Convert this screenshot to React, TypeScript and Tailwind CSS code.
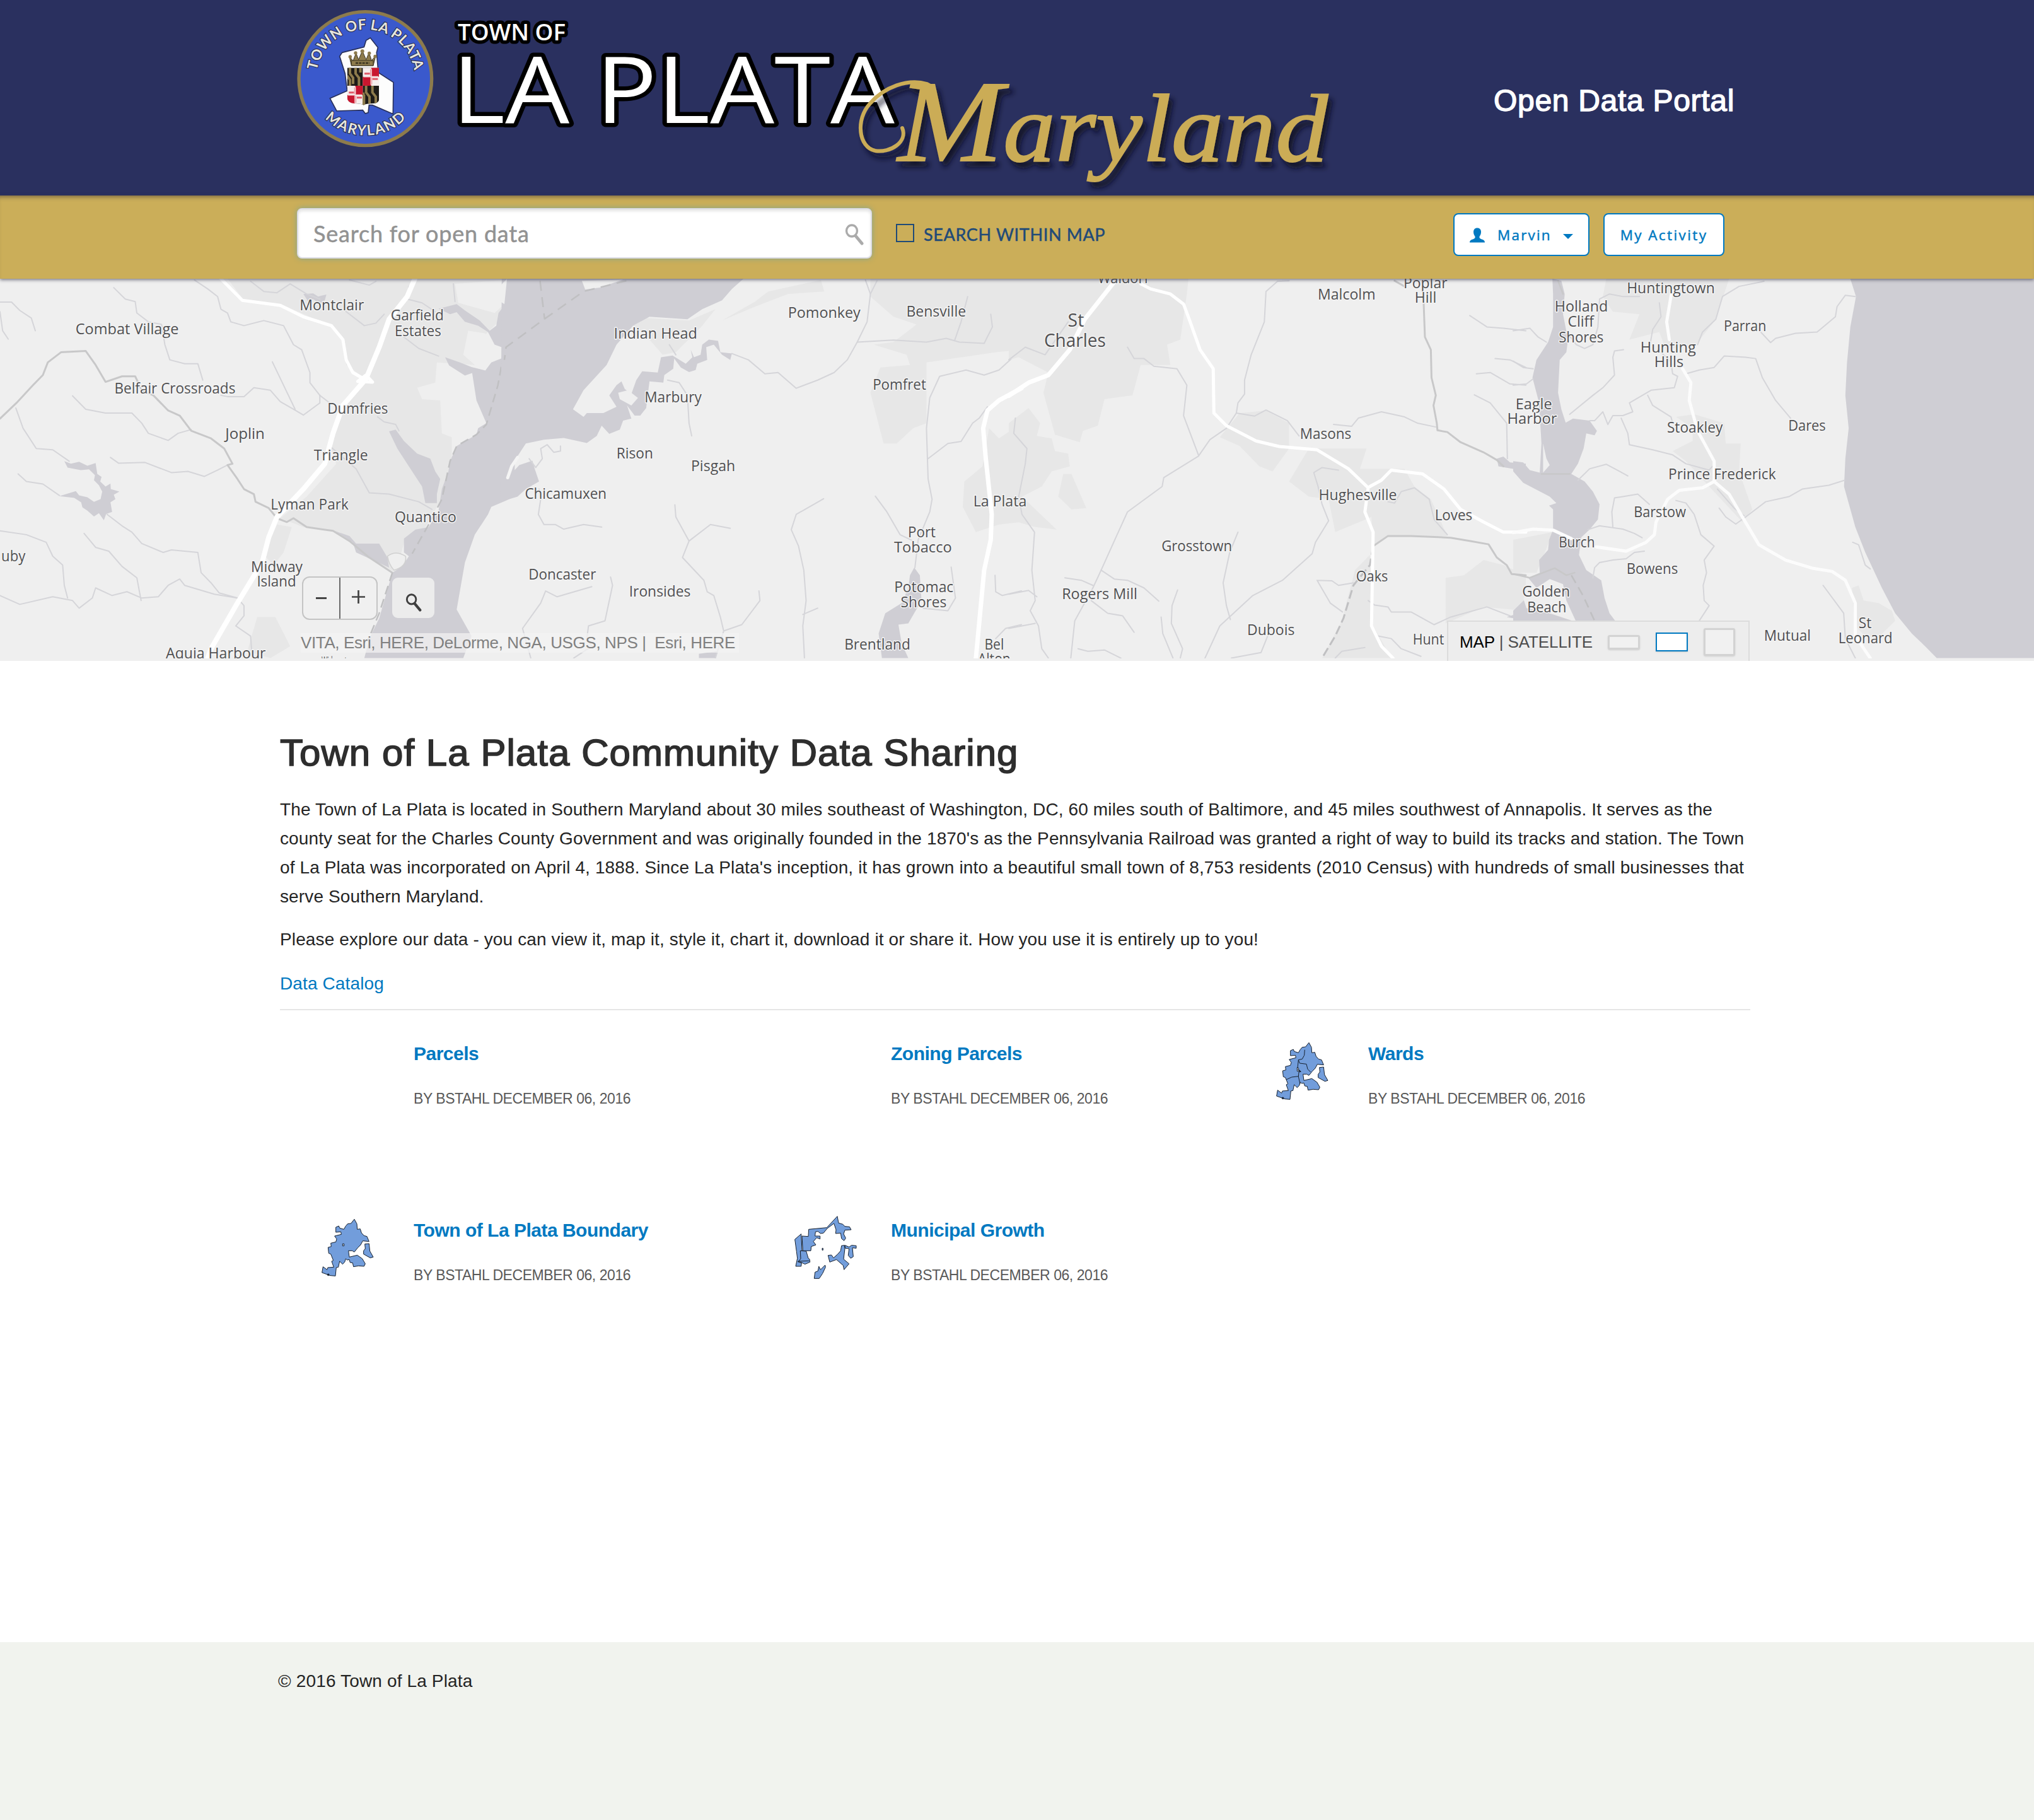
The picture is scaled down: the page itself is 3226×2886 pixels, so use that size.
import React from "react";

type Label = [string, number, number, number, number?];

const SHEET_Y = 0.4018;

/* Place names per map sheet: text, left, right, baseline, font size */
const labelsA: Label[] = [
  ["Combat Village", 229, 542, 248], ["Montclair", 909, 1104, 153], ["Garfield", 1185, 1346, 193], ["Estates", 1197, 1338, 254],
  ["Belfair Crossroads", 347, 714, 482], ["Dumfries", 993, 1177, 562], ["Joplin", 683, 803, 661], ["Triangle", 952, 1116, 746],
  ["Lyman Park", 821, 1057, 940], ["Quantico", 1197, 1384, 990], ["Midway", 761, 918, 1185], ["Island", 779, 898, 1244],
  ["uby", 4, 77, 1144], ["Aquia Harbour", 503, 806, 1528], ["Widewater", 975, 1070, 1562],
];
const labelsB: Label[] = [
  ["Indian Head", 332, 585, 264], ["Pomonkey", 860, 1080, 184], ["Bensville", 1219, 1400, 179], ["Pomfret", 1117, 1279, 467],
  ["Marbury", 425, 598, 517], ["Rison", 340, 451, 737], ["Pisgah", 566, 700, 787], ["Chicamuxen", 62, 310, 896],
  ["La Plata", 1422, 1584, 926], ["Port", 1224, 1308, 1049], ["Tobacco", 1182, 1357, 1109], ["Potomac", 1182, 1362, 1265],
  ["Shores", 1202, 1341, 1325], ["Doncaster", 73, 278, 1215], ["Ironsides", 378, 565, 1284], ["Brentland", 1031, 1231, 1493],
  ["Bel", 1456, 1515, 1493], ["Alton", 1436, 1535, 1550],
];
const labelsC: Label[] = [
  ["Waldorf", 270, 424, 46], ["St", 179, 228, 218, 30], ["Charles", 107, 294, 298, 30], ["Malcolm", 937, 1112, 111], ["Poplar", 1197, 1330, 66],
  ["Hill", 1231, 1297, 124], ["Masons", 883, 1039, 661], ["Hughesville", 940, 1177, 902], ["Loves", 1292, 1406, 981],
  ["Grosstown", 463, 677, 1105], ["Oaks", 1053, 1150, 1224], ["Rogers Mill", 161, 390, 1294], ["Dubois", 723, 867, 1434],
  ["Hunt", 1225, 1320, 1473],
];
const labelsD: Label[] = [
  ["Huntingtown", 342, 607, 85], ["Holland", 125, 285, 158], ["Cliff", 164, 243, 219], ["Shores", 137, 272, 279], ["Parran", 634, 762, 235],
  ["Hunting", 383, 550, 319], ["Hills", 425, 513, 377], ["Eagle", 7, 117, 543], ["Harbor", -18, 132, 601], ["Stoakley", 463, 631, 637],
  ["Dares", 828, 941, 628], ["Prince Frederick", 467, 791, 821], ["Barstow", 363, 520, 970], ["Burch", 137, 246, 1090],
  ["Bowens", 341, 496, 1194], ["Golden", 27, 171, 1284], ["Beach", 42, 160, 1344], ["St", 1040, 1079, 1408], ["Leonard", 979, 1142, 1468],
  ["Mutual", 755, 896, 1458],
];

function Labels({ items, ox, sx }: { items: Label[]; ox: number; sx: number }) {
  return (
    <g fill="#505052" stroke="#f4f4f4" strokeWidth={3} strokeLinejoin="round" className="[paint-order:stroke] [font-family:'Open_Sans','Noto_Sans',sans-serif]">
      {items.map(([t, x1, x2, y, size]) => (
        <text key={t + x1} x={ox + x1 * sx} y={430.5 + y * SHEET_Y} fontSize={size ?? 23.5} textLength={(x2 - x1) * sx} lengthAdjust="spacingAndGlyphs">
          {t}
        </text>
      ))}
    </g>
  );
}

const W = "#cfced4";
const U = "#e7e7e7";
const LAND = "#efefef";

function Lines({ d, c, w, dash }: { d: string[]; c: string; w: number; dash?: string }) {
  return (
    <g fill="none" stroke={c} strokeWidth={w} strokeLinejoin="round" strokeLinecap={dash ? "butt" : "round"} strokeDasharray={dash}>
      {d.map((p) => (
        <path key={p} d={p} vectorEffect="non-scaling-stroke" />
      ))}
    </g>
  );
}

const STREAM = "#d5d5d9";
const COUNTY = "#c8c8c9";

function MapCanvas() {
  return (
    <svg viewBox="0 442 3226 606" className="absolute inset-0 h-full w-full" aria-label="Map">
      <rect x="0" y="442" width="3226" height="606" fill={LAND} />
      <g transform="translate(0 430) scale(0.52296 0.4018)">
        <path fill={U} d="M690 30L1538 30L1535 170L1480 240L1405 330L1440 370L1325 360L1320 440L1265 460L1280 505L1335 510L1340 640L1370 655L1370 780L1330 920L1290 1010L1230 1050L1200 1190L1130 1140L1030 1030L920 1010L850 975L930 890L1020 760L1000 690L1040 530L1115 430L1050 370L1040 260L1000 215L860 135L740 115Z" />
        <path fill={LAND} d="M1420 235L1470 245L1530 305L1470 390L1405 330ZM1380 50L1535 35L1530 130L1500 165L1390 125Z" />
        <path fill={U} d="M780 1365L835 1365L880 1480L820 1527L750 1500ZM840 1000L885 1010L860 1110L830 1160L800 1120Z" />
        <path fill={W} d="M1535 30L1535 125L1512 165L1505 215L1485 235L1455 195L1410 155L1385 130L1330 148L1365 170L1385 162L1410 200L1450 215L1480 240L1500 290L1532 305L1520 345L1490 360L1472 392L1430 378L1395 360L1350 340L1362 372L1410 412L1432 402L1445 510L1475 600L1450 620L1445 645L1385 690L1365 750L1360 790L1340 860L1330 945L1300 1010L1260 1020L1225 1055L1225 1110L1240 1125L1220 1165L1190 1190L1170 1280L1150 1370L1120 1450L1105 1527L1405 1527L1430 1440L1385 1335L1410 1150L1440 1040L1480 960L1490 930L1535 905L1560 890L1568 30Z" />
        <path fill={W} d="M1180 632L1200 625L1225 670L1265 720L1305 740L1320 790L1335 820L1325 880L1325 915L1290 915L1280 850L1240 770L1205 700ZM1015 1025L1060 1045L1080 1075L1150 1075L1175 1130L1180 1170L1130 1140L1080 1110L1070 1070Z" />
        <path fill={W} d="M195 750L215 760L240 752L265 768L290 757L295 800L308 812L304 830L320 850L335 838L336 860L362 870L345 882L350 900L335 912L340 950L322 958L315 983L300 955L285 968L265 945L250 932L246 912L225 895L180 888L230 868L240 885L265 892L285 910L305 900L310 870L300 845L285 825L288 805L270 782L245 785L205 775ZM920 90L950 88L965 100L990 92L985 115L970 130L950 110L935 120Z" />
        <path fill={LAND} d="M1175 1125Q1200 1100 1230 1125Q1235 1165 1195 1180Q1180 1160 1175 1125Z" stroke="#d0d0d0" strokeWidth="3" />
        <Lines c={STREAM} w={2} d={[
          "M345 65L380 110L410 120L415 165L450 200L490 210L500 290L515 350L560 365L600 365L615 430",
          "M0 122L35 122L60 155L95 185L107 235M0 160L8 235L25 268",
          "M590 35L630 70L660 100L670 150L690 165L700 200L740 215L800 195L860 215L890 290L915 310L940 400L940 440L970 490L970 520L920 568L890 545L850 515L820 470L770 460L740 495L690 495L670 490",
          "M826 358L860 450L895 545M970 490L1000 520",
          "M760 40L800 80L840 85L880 50L930 90L970 110M1040 150L1105 215L1140 205L1165 170M1240 60L1235 110L1280 125L1320 160M1060 35L1120 55L1140 40M1375 50L1380 120M1225 260L1270 305L1330 335",
          "M220 492L260 545L320 560L400 560L430 600L450 640L510 668L540 640L580 625",
          "M48 540L70 620L110 700L160 705L210 750",
          "M335 735L360 758L440 755L520 795L570 790L620 810L660 785L690 765",
          "M55 800L80 830L130 840L180 885M325 960L370 1005L400 1030L430 1075L495 1110L520 1100L600 1110L610 1190L640 1230L665 1270L720 1290L740 1320L740 1360L715 1400L760 1440L765 1527",
          "M0 1025L80 1040L140 1070L160 1125L190 1160L195 1240L205 1290M0 1280L60 1315L160 1285L220 1300L240 1330L280 1290L290 1250L340 1280L385 1265L430 1290L480 1285L510 1240L545 1215L560 1240L650 1275L720 1290",
          "M255 1035L290 1090L330 1105L370 1165L415 1210L428 1300",
          "M1145 575L1165 595L1200 605L1210 630M1000 690L1080 780L1120 875L1180 880L1270 910L1310 940",
        ]} />
        <Lines c={COUNTY} w={3} d={[
          "M0 582L50 520L100 450L130 410L145 360L185 320L260 315L290 370L320 437L370 415L410 415L430 470L465 490L510 550L545 570L580 630L640 660L680 700L705 760L690 765L720 820L740 860L770 880L775 910L815 935L840 975L870 990L890 975L930 1010L1010 1025L1060 1065L1120 1130L1190 1190",
        ]} />
        <Lines c="#c0c0c2" w={2.5} dash="14 8" d={["M1555 285L1530 310L1510 450L1475 605L1445 645L1385 690L1365 750L1340 900L1300 1000L1250 1115M1190 1190L1150 1350L1115 1460"]} />
        <Lines c="#ffffff" w={8} d={["M1258 30L1235 100L1180 190L1150 300L1110 425L1040 530L1010 640L985 760L920 860L840 970L815 1050L795 1150L720 1310L640 1490L630 1527"]} />
        <Lines c="#ffffff" w={5} d={["M670 30L735 115L850 135L920 180L1005 215L1040 270L1050 350L1070 400L1110 430M1085 435L1130 438L1110 410Z"]} />
      </g>
      <g transform="translate(800 430) scale(0.52296 0.4018)">
        <path fill={U} d="M1110 30L1568 30L1568 310L1490 320L1280 360L1280 600L1240 620L1190 680L1150 680L1110 480L1140 380L1230 370L1220 330L1120 290L1180 280L1250 210L1180 180L1110 100ZM390 215L430 185L560 195L640 150L600 215L520 320L480 330L440 270ZM800 80L960 35L970 80L860 90L760 140L660 195L760 120ZM1470 620L1500 660L1568 600L1568 990L1500 1000L1430 1030L1390 930L1395 830L1450 770Z" />
        <path fill={W} d="M-8 30L725 30L690 70L660 115L600 150L555 190L440 180L390 215L340 290L310 370L240 470L208 545L240 575L250 560L300 560L340 535L318 490L340 450L355 435L365 465L385 485L400 430L418 395L465 400L475 340L510 333L550 365L570 340L565 310L575 340L595 330L600 290L620 270L648 275L655 320L690 325L685 350L660 330L635 290L612 300L615 350L585 365L580 390L560 398L535 380L515 345L512 385L485 410L482 440L440 435L430 540L412 570L395 570L372 530L385 582L360 590L350 625L318 642L295 610L280 650L250 678L180 658L120 665L65 680L40 730L10 815L45 765L85 748L92 780L105 830L65 860L40 890L0 905L-12 910Z" />
        <path fill={LAND} d="M235 38L360 33L290 65L245 72ZM-14 60L8 30L0 130L-12 120Z" />
        <path fill={LAND} d="M345 480L375 470L405 500L385 530L350 505Z" />
        <path fill={W} d="M1243 1170L1260 1200L1265 1300L1225 1390L1195 1395L1205 1470L1225 1527L1145 1527L1135 1430L1155 1350L1205 1310L1225 1250L1230 1200ZM590 1510L645 1500L640 1527L590 1527Z" />
        <Lines c={STREAM} w={2} d={[
          "M1095 35L1110 90L1100 200L1070 280L1040 350L1000 400L950 430L885 462L830 400L790 405L740 350L690 325",
          "M1130 38L1110 90M1070 280L1180 272L1280 280L1340 265L1380 280L1455 285L1480 220L1475 170M1405 100L1385 200L1365 275",
          "M1568 310L1500 390L1455 410L1400 390L1320 415L1290 500L1280 620L1285 820L1297 900L1290 950L1255 1060L1245 1170",
          "M1285 740L1345 680L1385 672L1420 600L1440 580L1465 535",
          "M495 430L530 440L555 490L560 600L568 650M500 290L520 330",
          "M75 740L95 775L115 740L110 700L130 685L150 715L170 710L170 690",
          "M105 860L110 900L103 960L120 1000L155 1000L180 1018L240 1000L295 1010",
          "M517 922L520 970L560 1065L540 1130L605 1220L615 1265L635 1280L655 1365L665 1420L640 1527M560 1065L625 1000L685 1015M665 1420L720 1395L775 1300L772 1262",
          "M968 898L885 960L870 1020L892 1085L908 1180L915 1300L905 1400L910 1527M905 1355L950 1330",
          "M1125 888L1160 950L1200 1040L1240 1065M1355 1168L1368 1290L1345 1340L1270 1330",
          "M265 1245L160 1285L125 1262L110 1310L55 1410L80 1527M322 1207L328 1240L305 1380L255 1400L250 1450L265 1480L210 1527",
          "M1488 1200L1490 1265L1510 1280L1568 1262M1568 1395L1520 1410L1490 1450M1550 580L1540 610L1568 650M1568 830L1555 880",
        ]} />
        <Lines c="#c0c0c2" w={2.5} dash="16 10" d={["M370 38L240 80L120 190L5 300L0 350M108 38L122 190"]} />
        <Lines c="#ffffff" w={7} d={["M1568 462L1500 510L1465 550L1452 620L1460 740L1478 960L1475 1060L1455 1180L1430 1527"]} />
        <Lines c="#f4f4f4" w={5} d={["M10 815L22 770L40 735"]} />
      </g>
      <g transform="translate(1600 430) scale(0.52296 0.4018)">
        <path fill={U} d="M0 30L545 30L540 90L520 270L480 290L490 370L400 370L375 490L290 505L270 610L225 630L215 675L140 645L105 480L120 400L30 340L0 350ZM60 540L95 600L85 650L130 660L140 710L180 720L185 770L130 790L100 850L40 890L145 1020L80 1010L0 980L0 600ZM165 800L190 800L235 935L190 940L150 890ZM700 560L780 550L850 600L850 700L800 790L760 770L700 690L640 655ZM910 700L1085 700L1065 780L1200 780L1230 850L1280 900L1330 1045L1150 1045L1105 1080L1100 970L990 1030L970 900L910 890L850 830ZM1325 1210L1380 1200L1440 1140L1500 1160L1568 1200L1568 1340L1440 1325L1325 1390ZM1050 1180L1095 1120L1105 1400L1160 1527L950 1527L1010 1380Z" />
        <path fill={W} d="M1480 740L1500 732L1520 755L1568 760L1568 835L1530 780L1485 770ZM1568 1310L1540 1330L1545 1350L1510 1365L1568 1378Z" />
        <Lines c={STREAM} w={2} d={[
          "M850 38L815 40L780 80L775 200L735 330L715 430L715 485L695 520L690 560L660 620L610 665L575 730L470 815L465 850L360 950L325 1050L280 1180L255 1250L200 1380L188 1527",
          "M0 350L50 300L110 330L180 200M360 300L380 345L410 345L440 375L510 385L540 450L530 570L575 725",
          "M690 560L745 572L780 548L845 590L880 650M985 605L1040 612L1060 580L1130 555L1200 575L1240 600L1295 615",
          "M1000 785L950 775L925 795L938 850L950 920L970 985L930 1070L920 1115L830 1220L740 1280L640 1400L595 1527",
          "M695 1030L670 1110L650 1230L660 1320L672 1375M280 1180L320 1215L360 1220L410 1250L455 1302M170 1210L220 1220L255 1240M250 1300L300 1350L345 1360L380 1425",
          "M512 1258L495 1320L493 1390L527 1490L520 1527M462 1365L467 1430L498 1527M210 1490L240 1500L290 1495L340 1527M785 1440L765 1505L675 1527",
          "M20 580L15 640L55 700L50 760L30 890L40 960L78 1030L70 1180L80 1300L65 1340L90 1400L100 1490L120 1527M0 1275L60 1260L85 1285M0 1410L80 1390",
          "M935 1220L980 1222L1000 1240L1045 1230M935 1220L975 1310L1012 1345M1090 1300L1110 1318L1150 1325L1160 1345L1220 1345L1290 1395L1340 1365L1450 1325L1520 1360M1120 1440L1160 1450L1190 1490L1250 1520M990 1527L1010 1500L1080 1485",
          "M1150 910L1170 915L1190 870L1230 855L1275 900L1290 980L1330 1040M1398 175L1450 220L1500 225L1568 235M1475 345L1520 350L1568 380M1418 405L1460 400L1520 445L1568 450M1412 488L1460 520L1510 600L1512 740",
        ]} />
        <Lines c={COUNTY} w={3} d={["M1170 38L1200 60M1258 120L1262 260L1280 310L1282 420L1295 490L1288 530L1298 600L1300 628L1330 635L1370 675L1440 715L1480 745L1500 770M1105 1085L1150 1045L1220 1045L1340 1052L1400 1065L1455 1078L1480 1130L1510 1160L1525 1195L1568 1200"]} />
        <Lines c="#c0c0c2" w={3} dash="14 6" d={["M1105 1085L1095 1160L1045 1240L1015 1370L990 1440L950 1527"]} />
        <Lines c="#ffffff" w={7} d={["M318 45L230 190L185 310L120 410L60 440L0 492"]} />
        <Lines c="#ffffff" w={5} d={["M400 50L430 70L490 90L530 130L550 200L580 310L620 385L622 560L660 610L750 670L820 692L935 705L1030 780L1090 855L1080 950L1105 1030L1100 1400L1130 1480L1165 1527", "M1095 850L1130 825L1160 785L1255 800L1320 860L1370 940L1440 990L1500 1030L1568 1030"]} />
      </g>
      <g transform="translate(2400 430) scale(0.5268 0.4018)">
        <path fill={U} d="M280 30L650 30L610 190L550 290L460 310L440 240L350 270L380 170L300 160L270 100ZM490 575L545 565L635 600L640 680L685 680L680 790L720 940L690 990L590 850L520 750L480 710L540 670L540 620ZM1020 1250L1040 1240L1055 1300L1100 1310L1140 1340L1150 1380L1080 1470L1030 1400ZM0 1060L120 1030L70 1190L0 1190Z" />
        <path fill={W} d="M1015 30L1032 100L1015 220L1005 360L1000 490L1010 620L1000 740L996 850L1030 1010L1060 1110L1110 1250L1150 1350L1200 1430L1240 1480L1275 1527L1568 1527L1568 30Z" />
        <path fill={W} d="M118 30L145 38L155 90L150 170L165 270L160 320L140 350L135 480L145 545L158 598L180 582L230 590L252 630L245 648L220 640L212 700L195 760L175 800L215 830L240 870L260 920L255 980L230 1020L205 1050L198 1120L220 1180L265 1220L275 1290L290 1350L310 1385L0 1385L0 1340L70 1250L45 1210L80 1190L78 1140L105 1100L108 1060L120 1020L120 940L108 925L130 915L110 890L30 835L0 790L0 750L30 755L50 785L80 795L85 680L78 520L58 420L70 350L105 280L120 220L120 90Z" />
        <path fill={LAND} d="M90 680L100 740L110 765L90 795ZM70 1250L110 1215L150 1235L160 1300L190 1385L110 1350L40 1330L30 1290Z" />
        <Lines c={STREAM} w={2} d={[
          "M0 235L50 225L75 260L100 280M0 355L30 380L60 385M0 450L40 445L60 425",
          "M380 100L330 100L290 90L260 110L255 220L240 290L215 305L190 290L160 240M440 125L445 180L420 230L412 290",
          "M332 310L305 315L300 340L305 410L270 460L240 490L170 565M755 40L680 60L630 100L610 190L570 240L555 290",
          "M1030 100L1000 95L975 140L970 180L915 240L850 245L790 265L775 282L745 240M520 405L560 390L605 380L635 335L700 340L730 345L750 420L790 510L835 580",
          "M445 320L475 360L480 405L495 415L485 460L415 470L350 520L360 555L330 570L300 570L285 605L270 555L245 590L230 590M405 490L420 530L475 575L480 600M325 580L345 640L350 685L420 705L480 725L520 760L590 785L600 770",
          "M195 825L230 780L280 762L320 790L345 808M410 920L375 880L330 890L305 895L297 950L300 1010M225 1020L260 1005L330 1018L365 1035L388 1052M395 1105L365 1110L340 1135L300 1140L260 1150L245 1170L240 1210",
          "M490 905L520 915L545 960L565 1040L605 1085L575 1140L582 1190L572 1240L575 1300L590 1320L560 1380",
          "M615 860L665 935L695 965M620 935L640 970L670 998L700 970L760 910L830 890L870 860L950 845L998 825M1022 1070L1040 1080L1060 1160L1075 1175M933 1240L995 1350L1000 1450L1030 1527",
        ]} />
        <Lines c={COUNTY} w={2.5} d={["M135 38L150 90M0 1195L50 1210L90 1190L125 1172L160 1200L185 1190", "M85 800L170 800"]} />
        <Lines c="#c0c0c2" w={2.5} dash="14 8" d={["M175 1200L210 1280L245 1380"]} />
        <Lines c="#fcfcfc" w={5} d={[
          "M478 75L462 200L470 270M510 385L535 440L530 510L555 630L605 750L605 830L650 880L690 970L740 1080L820 1140L900 1172L960 1185L1000 1220L1030 1310L1030 1440L1075 1527",
          "M605 830L570 855L500 865L465 900L430 990L425 1040L400 1070L340 1105L250 1088M0 1032L60 1018L120 1022L175 1055",
        ]} />
      </g>
      <Labels items={labelsA} ox={0} sx={0.52296} />
      <Labels items={labelsB} ox={800} sx={0.52296} />
      <Labels items={labelsC} ox={1600} sx={0.52296} />
      <Labels items={labelsD} ox={2400} sx={0.5268} />
      <rect x="0" y="1044" width="3226" height="4" fill="#efefef" />
    </svg>
  );
}

function Seal() {
  return (
    <svg viewBox="0 0 750 750" className="h-[250px] w-[250px] shrink-0" aria-label="Town seal">
      <defs>
        <path id="arcTop" d="M124 375A235 235 0 0 1 594 375" />
        <path id="arcBottom" d="M90 375A268 268 0 0 0 628 375" />
      </defs>
      <ellipse cx="358" cy="374" rx="316" ry="318" fill="#3a59cc" stroke="#8d7b4c" strokeWidth="16" />
      <g fill="#e6e6df" stroke="#2b2f52" strokeWidth="7" fontSize="68" fontWeight="700" className="[paint-order:stroke] [font-family:Lato,sans-serif]">
        <text><textPath href="#arcTop" startOffset="40" textLength="658">TOWN OF LA PLATA</textPath></text>
        <text><textPath href="#arcBottom" startOffset="50%" textAnchor="middle" textLength="430">MARYLAND</textPath></text>
      </g>
      <path d="M352 224L362 192L382 180L418 226L412 250L420 345L492 392L490 542L392 500L376 500L372 536L358 540L346 524L222 528L190 468L272 432L262 350L236 268L248 250Z" fill="#fdfdfd" stroke="#28305c" strokeWidth="5" />
      <path d="M292 312L282 268L300 290L314 252L326 284L344 242L362 284L376 250L388 288L408 264L396 312Z" fill="#8d7b4c" stroke="#3a3320" strokeWidth="3" />
      <g fill="#8d7b4c"><circle cx="286" cy="270" r="8" /><circle cx="312" cy="252" r="8" /><circle cx="344" cy="244" r="9" /><circle cx="377" cy="253" r="8" /><circle cx="405" cy="268" r="8" /></g>
      <rect x="292" y="288" width="104" height="24" fill="#8d7b4c" stroke="#3a3320" strokeWidth="3" />
      <path d="M312 300H378" stroke="#3a3320" strokeWidth="8" strokeDasharray="12 4" />
      <clipPath id="shield"><path d="M272 322H424V470Q424 490 396 492Q360 492 350 500Q340 492 305 492Q272 488 272 464Z" /></clipPath>
      <g clipPath="url(#shield)">
        <rect x="272" y="322" width="152" height="180" fill="#1d1b18" />
        <path d="M285 322V350L300 370V400M312 322V350L328 370V408M272 360L285 380V408M362 408V440L378 460V500M392 408V440L408 460V500M352 450V500M335 322V345" stroke="#8d7b4c" strokeWidth="12" fill="none" />
        <path d="M346 322H424V408H346ZM272 408H346V500H272Z" fill="#f6eeee" />
        <path d="M386 322H424V365H386ZM346 365H386V408H346ZM310 408H346V452H310ZM272 452H310V500H272Z" fill="#c8172f" />
        <path d="M386 330V362M354 350H380M386 368V402M392 376H418M310 416V448M280 440H304M310 456V490M318 464H342" stroke="#e05a68" strokeWidth="9" />
        <path d="M386 326V404M350 365H420M310 412V494M276 452H342" stroke="#f3dcdc" strokeWidth="5" />
        <path d="M350 440V500" stroke="#8d7b4c" strokeWidth="10" />
      </g>
    </svg>
  );
}

function Wordmark() {
  return (
    <svg viewBox="710 0 1420 310" className="h-[310px] w-[1420px] shrink-0" aria-label="Town of La Plata Maryland">
      <defs>
        <filter id="drop" x="-10%" y="-20%" width="120%" height="150%">
          <feDropShadow dx="6" dy="9" stdDeviation="4" floodColor="#0a0c20" floodOpacity="0.85" />
        </filter>
      </defs>
      <g fill="#ffffff" stroke="#000000" strokeLinejoin="round" className="[paint-order:stroke] [font-family:'Open_Sans',sans-serif]">
        <text x="726" y="64" fontSize="36" fontWeight="600" strokeWidth="11" textLength="171" lengthAdjust="spacingAndGlyphs">TOWN OF</text>
        <text x="717" y="195" fontSize="147" fontWeight="500" strokeWidth="13" textLength="702" lengthAdjust="spacingAndGlyphs">LA PLATA</text>
      </g>
      <g filter="url(#drop)">
        <path d="M1431 203C1440 225 1412 243 1388 239C1362 234 1356 190 1380 164C1402 138 1440 124 1470 133C1482 138 1484 152 1480 166" fill="none" stroke="#cbac57" strokeWidth="6" strokeLinecap="round" />
        <text x="1424" y="255" fontSize="152" fill="#cbac57" stroke="#cbac57" strokeWidth="2" fontStyle="italic" textLength="682" lengthAdjust="spacingAndGlyphs" className="[font-family:'Liberation_Serif',serif]"><tspan fontSize="184">M</tspan>aryland</text>
      </g>
    </svg>
  );
}

function Magnifier({ className, color }: { className: string; color: string }) {
  return (
    <svg viewBox="0 0 30 34" className={className} fill="none" stroke={color}>
      <ellipse cx="11" cy="11" rx="8.5" ry="9" strokeWidth="3.4" />
      <path d="M17 19L27 31" strokeWidth="5" strokeLinecap="round" />
    </svg>
  );
}

function Shape({ children, offset }: { children: React.ReactNode; offset: number }) {
  return (
    <svg viewBox={`${offset} 0 636 480`} className="h-[160px] w-[212px] shrink-0" fill="#729ddb" stroke="#16202e" strokeWidth="3" strokeLinejoin="round">
      {children}
    </svg>
  );
}

const OUTLINE =
  "M246 100L258 122L260 148L274 146L280 165L292 178L306 182L316 206L286 203L276 222L262 236L246 256L236 250L218 250L222 280L260 271L284 288L298 312L292 324L266 322L242 326L238 308L226 306L222 292L212 294L205 288L200 304L190 314L176 300L170 328L160 330L156 370L132 368L92 354L97 326L116 340L120 330L148 328L138 300L146 296L134 266L124 262L121 234L136 230L134 214L158 208L162 194L152 180L168 176L184 172L182 160L158 162L158 138L172 132L176 142L196 148L204 134L214 122L230 120Z";
const ISLET = "M296 218L316 216L320 252L336 280L322 284L290 266L290 250L298 240Z";

const boundary = (
  <Shape offset={-108}>
    <path d={OUTLINE} />
    <path d={ISLET} />
    <rect x="190" y="217" width="7" height="10" fill="#dfe8f5" />
    <circle cx="122" cy="364" r="4" fill="#16202e" />
  </Shape>
);
const wards = (
  <Shape offset={-66}>
    <g transform="translate(42 0)">
      <path d={OUTLINE} />
      <path d={ISLET} />
      <path fill="none" d="M226 134L224 160L214 178L196 182L202 198L234 202L240 226L254 240M196 182L192 222L208 238L198 240L196 262L204 296M138 276L164 264L198 260" />
      <path fill="#fff" d="M190 218L198 222L194 230L204 236L190 236Z" />
      <circle cx="122" cy="364" r="4" fill="#16202e" />
    </g>
  </Shape>
);
const growth = (
  <Shape offset={-87}>
    <path d="M294 86L300 118L320 124L330 134L352 136L360 150L330 152L324 170L334 190L326 202L314 192L310 166L286 168L288 150L278 120L246 144L228 166L214 168L202 158L190 160L188 180L212 180L212 194L196 188L180 206L192 222L170 230L168 250L130 250L126 180L156 182L158 148L244 140Z" />
    <path d="M122 170L126 250L118 252L122 290L106 302L124 308L122 324L96 324L104 286L100 254L92 196Z" />
    <path d="M118 250L146 252L156 286L162 290L164 304L140 314L120 304L108 302L120 288ZM110 300L160 298" />
    <path d="M314 226L328 224L330 240L324 290L350 312L326 340L322 320L290 292L258 304L250 272L266 270L276 284L296 266L310 250Z" />
    <path d="M330 224L350 232L362 224L384 226L384 238L366 236L370 278L358 286L346 272L350 240L332 238Z" />
    <path d="M206 324L214 340L236 318L238 328L224 358L208 382L184 382L188 352L202 346Z" />
    <rect x="222" y="238" width="4" height="9" />
  </Shape>
);

function Card({ title, thumb }: { title: string; thumb?: React.ReactNode }) {
  return (
    <article className="flex h-[280px] w-[757px]">
      <div className="w-[212px] shrink-0">{thumb}</div>
      <div className="pt-[31px] whitespace-nowrap">
        <h3 className="text-[30px] leading-[40px] font-bold tracking-[-0.5px] text-[#0079c1]">{title}</h3>
        <p className="mt-[36px] text-[23px] leading-[30px] tracking-[-0.45px] text-[#595959]">BY BSTAHL DECEMBER 06, 2016</p>
      </div>
    </article>
  );
}

export default function App() {
  return (
    <div className="h-[2886px] w-[3226px] overflow-hidden bg-white text-[#242424] [font-family:'Liberation_Sans',Arial,sans-serif]">
      <header className="flex h-[310px] items-start bg-[#2a305f] pl-[460px]">
        <Seal />
        <Wordmark />
        <h1 className="mt-[128px] ml-[239px] text-[48px] leading-[64px] tracking-[0.7px] whitespace-nowrap text-white [-webkit-text-stroke:1.4px_white]">Open Data Portal</h1>
      </header>

      <div className="relative z-10 flex h-[132px] items-start bg-[#cbae59] pl-[471px] shadow-[0_2px_5px_rgba(60,60,80,0.65),inset_0_7px_7px_-5px_rgba(70,60,50,0.65)]">
        <div className="mt-[20px] flex h-[80px] w-[912px] items-center justify-between rounded-[8px] border-2 border-[#dcdce4] bg-white pr-[11px] pl-[24px] shadow-[0_0_8px_rgba(120,165,150,0.9),inset_0_3px_4px_rgba(0,0,0,0.1)]">
          <span className="text-[36px] tracking-[0.8px] text-[#929292] [-webkit-text-stroke:0.5px_#929292] [font-family:Lato,sans-serif]">Search for open data</span>
          <Magnifier className="mt-1 h-[34px] w-[30px]" color="#ababab" />
        </div>
        <div className="mt-[45px] ml-[38px] h-[29px] w-[29px] border-2 border-[#1f4a78]" />
        <span className="mt-[42px] ml-[15px] w-[289px] text-[27px] leading-[40px] tracking-[0.65px] whitespace-nowrap text-[#1f4a78] [-webkit-text-stroke:0.5px_#1f4a78] [font-family:Lato,sans-serif]">SEARCH WITHIN MAP</span>
        <button className="mt-[28px] ml-[551px] flex h-[68px] w-[216px] items-center rounded-[8px] border-2 border-[#0079c1] bg-white pt-[2px] pl-[24px] text-[#0079c1]">
          <svg viewBox="0 0 24 24" className="h-[24px] w-[24px]" fill="#0079c1">
            <path d="M12 0.5C16 0.5 18 3 18 7C18 10.5 16.5 12.500 15.500 14C15 16 16 17 18 18C21 19 24 20 24 23.500H0C0 20 3 19 6 18C8 17 9 16 8.500 14C7.500 12.500 6 10.500 6 7C6 3 8 .5 12 .5Z" />
          </svg>
          <span className="ml-[20px] w-[86px] text-left text-[22.5px] tracking-[2.2px] [-webkit-text-stroke:0.5px_#0079c1] [font-family:'Open_Sans',sans-serif]">Marvin</span>
          <svg viewBox="0 0 16 8" className="mt-1 ml-[18px] h-[8px] w-[16px]" fill="#0079c1"><path d="M0 0H16L8 8Z" /></svg>
        </button>
        <button className="mt-[28px] ml-[22px] h-[68px] w-[192px] rounded-[8px] border-2 border-[#0079c1] bg-white pt-[2px] text-[22.5px] tracking-[2.4px] whitespace-nowrap text-[#0079c1] [-webkit-text-stroke:0.5px_#0079c1] [font-family:'Open_Sans',sans-serif]">My Activity</button>
      </div>

      <section className="relative h-[606px] overflow-hidden">
        <MapCanvas />
        <div className="absolute top-[472px] left-[479px] flex h-[69px] w-[120px] rounded-[12px] border-2 border-[#c4c4c4] bg-[#f0f0f0]/90">
          <div className="flex flex-1 items-center justify-center border-r-2 border-[#6a6a6a]"><span className="h-[3px] w-[17px] bg-[#444]" /></div>
          <div className="flex flex-1 items-center justify-center pb-1">
            <svg viewBox="0 0 20 20" className="h-[21px] w-[21px]" stroke="#444" strokeWidth="2.6"><path d="M0 10H20M10 0V20" /></svg>
          </div>
        </div>
        <div className="absolute top-[474px] left-[622px] flex h-[64px] w-[67px] items-center justify-center rounded-[9px] bg-[#ececec] pt-[14px]">
          <Magnifier className="h-[29px] w-[26px]" color="#3f3f3f" />
        </div>
        <div className="absolute top-[562px] left-[477px] h-[31px] w-[695px] bg-[#f4f4f4]/70 text-[26px] leading-[31px] tracking-[-0.38px] whitespace-pre text-[#808080]">VITA, Esri, HERE, DeLorme, NGA, USGS, NPS |  Esri, HERE</div>
        <div className="absolute top-[542px] left-[2295px] flex h-[64px] w-[480px] items-center border-2 border-b-0 border-[#dcdcdc] bg-[#ededed] pt-[2px] pl-[18px] text-[26px] tracking-[-0.1px] whitespace-pre text-[#4d4d4d]">
          <span className="w-[212px]"><span className="text-black">MAP</span> | SATELLITE</span>
          <span className="ml-[23px] h-[23px] w-[51px] rounded-[3px] border-[3px] border-[#d3d3d3] bg-[#f1f1f1] shadow" />
          <span className="ml-[25px] h-[30px] w-[51px] border-2 border-[#0079c1] bg-white shadow" />
          <span className="ml-[25px] h-[44px] w-[50px] rounded-[3px] border-[3px] border-[#d3d3d3] bg-[#f1f1f1] shadow" />
        </div>
      </section>

      <main className="h-[1556px] pt-[110px] pl-[444px]">
        <h2 className="text-[60px] leading-[72px] tracking-[1.05px] whitespace-nowrap text-[#2e2e2e] [-webkit-text-stroke:1.6px_#2e2e2e]">Town of La Plata Community Data Sharing</h2>
        <div className="mt-[31px] text-[28px] leading-[46px] tracking-[0.12px] whitespace-nowrap">
          <p>
            The Town of La Plata is located in Southern Maryland about 30 miles southeast of Washington, DC, 60 miles south of Baltimore, and 45 miles southwest of Annapolis. It serves as the<br />
            county seat for the Charles County Government and was originally founded in the 1870's as the Pennsylvania Railroad was granted a right of way to build its tracks and station. The Town<br />
            of La Plata was incorporated on April 4, 1888. Since La Plata's inception, it has grown into a beautiful small town of 8,753 residents (2010 Census) with hundreds of small businesses that<br />
            serve Southern Maryland.
          </p>
          <p className="mt-[22px]">Please explore our data - you can view it, map it, style it, chart it, download it or share it. How you use it is entirely up to you!</p>
          <p className="mt-[24px] text-[#0079c1]">Data Catalog</p>
        </div>
        <div className="mt-[17px] w-[2332px] border-t-2 border-[#e6e6e6]" />
        <div className="mt-[18px] flex w-[2332px] flex-wrap">
          <Card title="Parcels" />
          <Card title="Zoning Parcels" />
          <Card title="Wards" thumb={wards} />
          <Card title="Town of La Plata Boundary" thumb={boundary} />
          <Card title="Municipal Growth" thumb={growth} />
        </div>
      </main>

      <footer className="h-[282px] bg-[#f1f3ee] pt-[39px] pl-[441px] text-[28px] leading-[46px] tracking-[0.15px]">© 2016 Town of La Plata</footer>
    </div>
  );
}
